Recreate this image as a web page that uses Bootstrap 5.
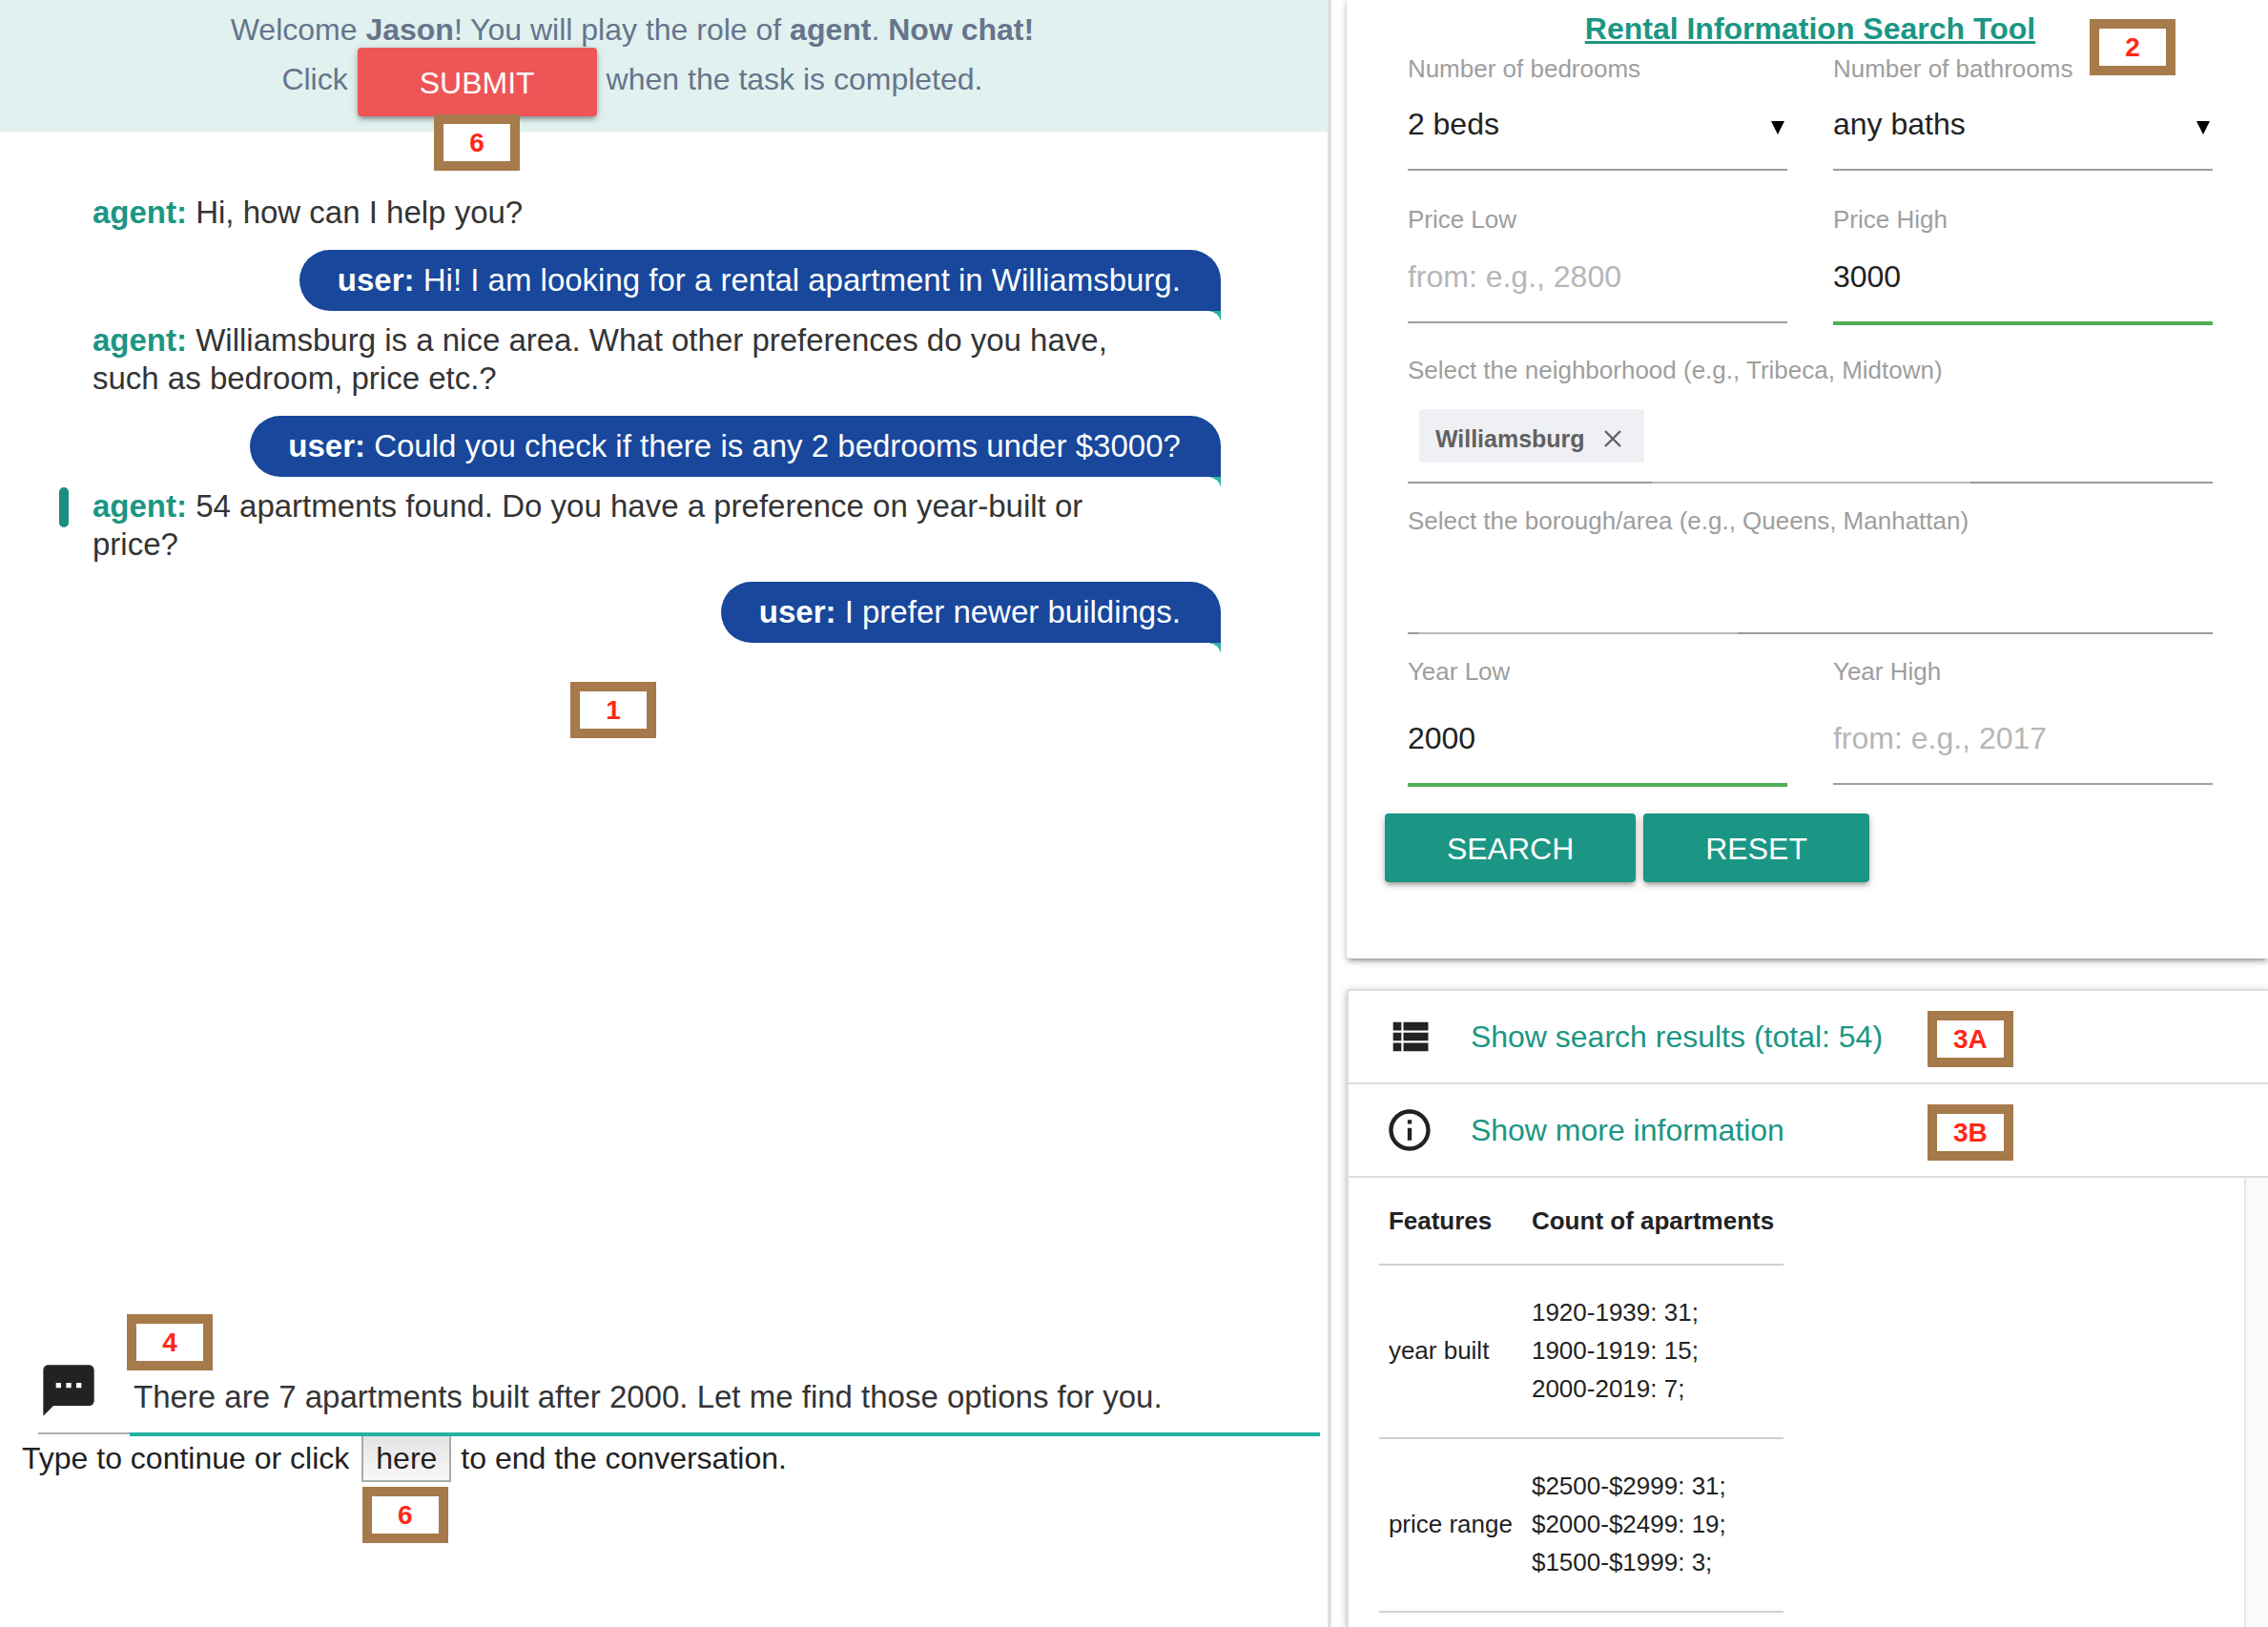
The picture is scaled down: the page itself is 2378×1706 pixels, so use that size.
<!DOCTYPE html>
<html lang="en">
<head>
<meta charset="utf-8">
<meta name="viewport" content="width=device-width, initial-scale=1">
<title>Rental chat task</title>
<link href="https://cdn.jsdelivr.net/npm/bootstrap@5.3.0/dist/css/bootstrap.min.css" rel="stylesheet">
<style>
:root { --teal: #1b9684; --ink: #222; --line: #9e9e9e; }
body { font-family: "Liberation Sans", Arial, sans-serif; font-size: 32px; line-height: 40px; color: var(--ink); background: #fff; }
.chat-pane { flex: 0 0 58.7%; border-right: 4px solid #e0e0e0; }
.welcome { background: #e1f1ef; color: #66758c; padding: 12px 66px 16px 0; line-height: 38px; }
.welcome-action { gap: 10px; line-height: 66px; }
.raised { height: 72px; border: 0; border-radius: 4px; padding: 0 65px; font-size: 32px; line-height: 74px; color: #fff; box-shadow: 0 4px 4px rgba(0,0,0,.14), 0 6px 2px -4px rgba(0,0,0,.12), 0 2px 10px rgba(0,0,0,.2); }
.raised-teal, .raised-teal:hover { background: var(--teal); color: #fff; }
.raised-red, .raised-red:hover { background: #ee5557; color: #fff; }
.callout { position: absolute; z-index: 3; width: 90px; height: 59px; border: 10px solid #a67a4a; background: #fff; color: #ff2718; font-size: 28px; font-weight: 700; line-height: 39px; text-align: center; }
.callout-submit { margin-top: -2px; }
.callout-end { margin-top: 5px; }
.callout-chat { left: 501px; top: 30px; }
.callout-reply { left: 93px; top: -48px; }
.callout-search { right: 97px; top: 20px; }
.callout-row { left: 607px; top: 21px; }
.messages { padding: 65px 112px 0 97px; color: #343434; font-size: 33px; }
.from-agent { max-width: 1100px; margin-bottom: 19px; position: relative; }
.from-agent strong { color: var(--teal); }
.from-agent.unread::before { content: ""; position: absolute; left: -35px; top: 0; width: 10px; height: 42px; border-radius: 5px; background: #1a8f7f; }
.from-user { position: relative; margin: 0 0 11px auto; width: fit-content; padding: 12px 42px 12px 40px; border-radius: 32px 32px 0 32px; background: #18479b; color: #fff; }
.from-user::after { content: ""; position: absolute; right: 0; top: 100%; width: 14px; height: 12px; background: radial-gradient(ellipse 14px 12px at 0 100%, transparent 97%, #2bb3a3 100%); }
.composer { margin: 0 8px 0 40px; }
.composer-icon { width: 96px; height: 78px; border-bottom: 2px solid #aeaeae; }
.composer input { height: 80px; border: 0; border-bottom: 4px solid #22b2a4; border-radius: 0; padding: 2px 0 0 4px; font-size: 33px; color: #343434; background: none; }
.ending { padding: 0 0 152px 23px; line-height: 46px; }
.ending button { height: 48px; margin: 0 10px 0 13px; padding: 0 13px; font-size: 32px; line-height: 46px; color: var(--ink); border: 2px solid #aaa; border-top: 0; border-radius: 0; background: linear-gradient(#e4e4e4, #f8f8f8); }
.tool-pane { padding-left: 16px; min-width: 0; }
.sheet { position: relative; background: #fff; box-shadow: 0 4px 4px rgba(0,0,0,.14), 0 6px 2px -4px rgba(0,0,0,.12), 0 2px 10px rgba(0,0,0,.2); }
.search-sheet { padding: 11px 34px 80px 40px; margin-bottom: 32px; border-radius: 0 0 0 4px; }
.search-sheet h1 { font-size: 32px; line-height: 38px; font-weight: 700; margin: 0 0 8px; }
.search-sheet h1 a { color: var(--teal); }
.field-grid { display: grid; grid-template-columns: 1fr 1fr; column-gap: 48px; grid-auto-rows: 158px; padding: 0 24px; }
.field-grid label { display: block; font-size: 26px; line-height: 30px; color: var(--line); white-space: nowrap; }
.wide { grid-column: 1 / -1; }
.line-field { border: 0; border-bottom: 2px solid var(--line); border-radius: 0; background: none; padding: 0 0 2px; font-size: 32px; color: var(--ink); height: 94px; }
.line-field:focus { box-shadow: none; }
.line-field::placeholder { color: #b6b6b6; opacity: 1; }
select.line-field { height: 92px; padding-bottom: 4px; }
.line-field.ok { border-bottom: 4px solid #4fae54; height: 96px; }
.line-field.tall { height: 104px; padding-top: 10px; }
.line-field.tall.ok { height: 106px; }
.pick { position: relative; }
.pick svg { position: absolute; right: 3px; top: 40px; pointer-events: none; }
.tag-box { height: 104px; border-bottom: 2px solid #9a9a9a; padding-left: 12px; gap: 8px; }
.tag-box input { width: 334px; height: 104px; border: 0; border-bottom: 2px solid #bbb; padding: 0; background: none; outline: 0; }
.chip-tag { width: 236px; height: 56px; margin-top: 26px; padding: 6px 24px 0 17px; border-radius: 4px; background: #eff0f4; color: #616161; font-size: 25px; font-weight: 700; }
.search-actions { gap: 8px; margin-top: 6px; }
.results-sheet { border: solid #ddd; border-width: 2px 0 0 2px; }
.result-link { height: 98px; border-bottom: 2px solid #ddd; padding-left: 38px; gap: 38px; color: var(--teal); text-decoration: none; position: relative; }
.info-body { padding-left: 32px; }
.scroll-edge { width: 25px; border-left: 2px solid #e7e7e7; background: #fafafa; }
.feature-table { width: 424px; font-size: 26px; line-height: 40px; color: var(--ink); border-collapse: collapse; align-self: flex-start; }
.feature-table th, .feature-table td { padding: 29px 10px 31px; border-bottom: 2px solid #d0d0d0; white-space: nowrap; font-weight: 400; vertical-align: middle; }
.feature-table thead th { padding: 25px 10px; font-weight: 700; }
.feature-table tr > :first-child { width: 150px; }
</style>
<script src="https://cdn.jsdelivr.net/npm/bootstrap@5.3.0/dist/js/bootstrap.bundle.min.js"></script>
</head>
<body>
<div class="d-flex vh-100 overflow-hidden">
  <main class="chat-pane d-flex flex-column">
    <header class="welcome text-center">
      <div>Welcome <strong>Jason</strong>! You will play the role of <strong>agent</strong>. <strong>Now chat!</strong></div>
      <div class="welcome-action d-flex justify-content-center align-items-start">
        <span>Click</span>
        <span class="position-relative d-flex">
          <button type="button" class="btn raised raised-red">SUBMIT</button>
          <span class="callout callout-submit top-100 start-50 translate-middle-x">6</span>
        </span>
        <span>when the task is completed.</span>
      </div>
    </header>

    <section class="messages flex-grow-1">
      <div class="from-agent"><strong>agent:</strong> Hi, how can I help you?</div>
      <div class="from-user"><strong>user:</strong> Hi! I am looking for a rental apartment in Williamsburg.</div>
      <div class="from-agent"><strong>agent:</strong> Williamsburg is a nice area. What other preferences do you have, such as bedroom, price etc.?</div>
      <div class="from-user"><strong>user:</strong> Could you check if there is any 2 bedrooms under $3000?</div>
      <div class="from-agent unread"><strong>agent:</strong> 54 apartments found. Do you have a preference on year-built or price?</div>
      <div class="from-user"><strong>user:</strong> I prefer newer buildings.</div>
      <div class="position-relative"><span class="callout callout-chat">1</span></div>
    </section>

    <form class="composer position-relative d-flex align-items-start">
      <label class="composer-icon flex-shrink-0" for="reply" aria-label="Reply">
        <svg class="d-block" width="64" height="64" viewBox="0 0 24 24" fill="#222"><path d="M20 2H4c-1.1 0-1.99.9-1.99 2L2 22l4-4h14c1.1 0 2-.9 2-2V4c0-1.1-.9-2-2-2zM9 11H7V9h2v2zm4 0h-2V9h2v2zm4 0h-2V9h2v2z"/></svg>
      </label>
      <input id="reply" class="form-control" type="text" value="There are 7 apartments built after 2000. Let me find those options for you.">
      <span class="callout callout-reply">4</span>
    </form>
    <div class="ending d-flex align-items-start">
      <span>Type to continue or click</span>
      <span class="position-relative d-flex">
        <button type="button">here</button>
        <span class="callout callout-end top-100 start-50 translate-middle-x">6</span>
      </span>
      <span>to end the conversation.</span>
    </div>
  </main>

  <aside class="tool-pane flex-grow-1 d-flex flex-column">
    <form class="sheet search-sheet">
      <h1 class="text-center"><a href="#">Rental Information Search Tool</a></h1>
      <span class="callout callout-search">2</span>
      <div class="field-grid">
        <div>
          <label for="beds">Number of bedrooms</label>
          <div class="pick">
            <select id="beds" class="form-control line-field"><option>2 beds</option></select>
            <svg width="14" height="14" viewBox="0 0 14 14"><path d="M0 0h14L7 14z"/></svg>
          </div>
        </div>
        <div>
          <label for="baths">Number of bathrooms</label>
          <div class="pick">
            <select id="baths" class="form-control line-field"><option>any baths</option></select>
            <svg width="14" height="14" viewBox="0 0 14 14"><path d="M0 0h14L7 14z"/></svg>
          </div>
        </div>
        <div>
          <label for="price-low">Price Low</label>
          <input id="price-low" class="form-control line-field" placeholder="from: e.g., 2800">
        </div>
        <div>
          <label for="price-high">Price High</label>
          <input id="price-high" class="form-control line-field ok" value="3000">
        </div>
        <div class="wide">
          <label for="hood">Select the neighborhood (e.g., Tribeca, Midtown)</label>
          <div class="tag-box d-flex align-items-start">
            <span class="chip-tag d-flex align-items-center justify-content-between">Williamsburg
              <svg width="18" height="18" viewBox="0 0 18 18" stroke="#616161" stroke-width="2.4"><path d="M1 1l16 16M17 1L1 17"/></svg>
            </span>
            <input id="hood" type="text">
          </div>
        </div>
        <div class="wide">
          <label for="borough">Select the borough/area (e.g., Queens, Manhattan)</label>
          <div class="tag-box d-flex align-items-start"><input id="borough" type="text"></div>
        </div>
        <div>
          <label for="year-low">Year Low</label>
          <input id="year-low" class="form-control line-field tall ok" value="2000">
        </div>
        <div>
          <label for="year-high">Year High</label>
          <input id="year-high" class="form-control line-field tall" placeholder="from: e.g., 2017">
        </div>
      </div>
      <div class="search-actions d-flex">
        <button type="button" class="btn raised raised-teal">SEARCH</button>
        <button type="button" class="btn raised raised-teal">RESET</button>
      </div>
    </form>

    <section class="sheet results-sheet flex-grow-1 d-flex flex-column">
      <a href="#" class="result-link d-flex align-items-center">
        <svg width="52" height="52" viewBox="0 0 24 24" fill="#222"><path d="M4 14h4v-4H4v4zm0 5h4v-4H4v4zM4 9h4V5H4v4zm5 5h12v-4H9v4zm0 5h12v-4H9v4zM9 5v4h12V5H9z"/></svg>
        Show search results (total: 54)
        <span class="callout callout-row">3A</span>
      </a>
      <a href="#" class="result-link d-flex align-items-center">
        <svg width="52" height="52" viewBox="0 0 24 24" fill="#222"><path d="M11 17h2v-6h-2v6zm1-15C6.480 2 2 6.480 2 12s4.480 10 10 10 10-4.480 10-10S17.520 2 12 2zm0 18c-4.410 0-8-3.590-8-8s3.590-8 8-8 8 3.590 8 8-3.590 8-8 8zM11 9h2V7h-2v2z"/></svg>
        Show more information
        <span class="callout callout-row">3B</span>
      </a>
      <div class="info-body flex-grow-1 d-flex justify-content-between">
        <table class="feature-table">
          <thead><tr><th>Features</th><th>Count of apartments</th></tr></thead>
          <tbody>
            <tr><td>year built</td><td>1920-1939: 31;<br>1900-1919: 15;<br>2000-2019: 7;</td></tr>
            <tr><td>price range</td><td>$2500-$2999: 31;<br>$2000-$2499: 19;<br>$1500-$1999: 3;</td></tr>
          </tbody>
        </table>
        <div class="scroll-edge"></div>
      </div>
    </section>
  </aside>
</div>
</body>
</html>
